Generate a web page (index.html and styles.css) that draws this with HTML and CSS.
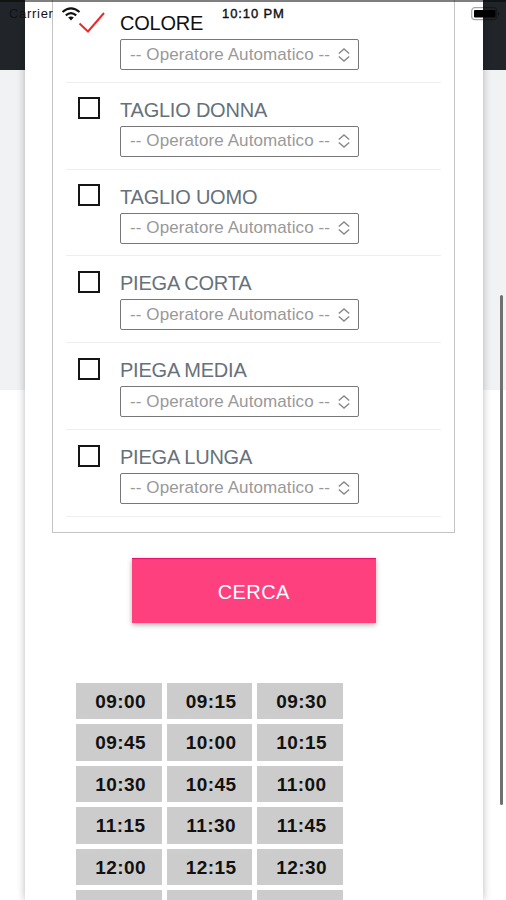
FILE: index.html
```html
<!DOCTYPE html>
<html lang="it">
<head>
<meta charset="utf-8">
<title>Prenotazione</title>
<link rel="stylesheet" href="styles.css">
</head>
<body>
<svg class="defs" width="0" height="0" aria-hidden="true">
  <symbol id="chevrons" viewBox="0 0 14 16"><path d="M1.8 6.5 L7 2 L12.2 6.5 M1.8 9.5 L7 14 L12.2 9.5" fill="none" stroke="currentColor" stroke-width="1.4"/></symbol>
</svg>
<main class="card">
  <section class="services">
    <div class="service selected">
      <svg class="check" viewBox="0 0 28 22"><path d="M1.5 12.5 L10 20.5 L26 2" fill="none" stroke="#ed2929" stroke-width="2"/></svg>
      <div class="detail"><h2>COLORE</h2><div class="select"><span>-- Operatore Automatico --</span><svg><use href="#chevrons"/></svg></div></div>
    </div>
    <div class="service"><i class="box"></i><div class="detail"><h2>TAGLIO DONNA</h2><div class="select"><span>-- Operatore Automatico --</span><svg><use href="#chevrons"/></svg></div></div></div>
    <div class="service"><i class="box"></i><div class="detail"><h2>TAGLIO UOMO</h2><div class="select"><span>-- Operatore Automatico --</span><svg><use href="#chevrons"/></svg></div></div></div>
    <div class="service"><i class="box"></i><div class="detail"><h2>PIEGA CORTA</h2><div class="select"><span>-- Operatore Automatico --</span><svg><use href="#chevrons"/></svg></div></div></div>
    <div class="service"><i class="box"></i><div class="detail"><h2>PIEGA MEDIA</h2><div class="select"><span>-- Operatore Automatico --</span><svg><use href="#chevrons"/></svg></div></div></div>
    <div class="service"><i class="box"></i><div class="detail"><h2>PIEGA LUNGA</h2><div class="select"><span>-- Operatore Automatico --</span><svg><use href="#chevrons"/></svg></div></div></div>
  </section>
  <button class="search">CERCA</button>
  <div class="times">
    <span>09:00</span><span>09:15</span><span>09:30</span>
    <span>09:45</span><span>10:00</span><span>10:15</span>
    <span>10:30</span><span>10:45</span><span>11:00</span>
    <span>11:15</span><span>11:30</span><span>11:45</span>
    <span>12:00</span><span>12:15</span><span>12:30</span>
    <span></span><span></span><span></span>
  </div>
</main>
<header class="status">
  <span class="carrier">Carrier</span>
  <svg class="wifi" viewBox="0 0 20 14"><g fill="none" stroke="#111" stroke-width="2.1"><path d="M1.5 5 Q10 -2.4 18.5 5"/><path d="M4.8 8.4 Q10 3.8 15.2 8.4"/></g><path d="M7.2 10.6 Q10 8.4 12.8 10.6 L10 13.4Z" fill="#111"/></svg>
  <span class="clock">10:10 PM</span>
  <svg class="battery" viewBox="0 0 30 14"><rect x=".7" y=".7" width="25" height="12" rx="3" fill="none" stroke="#000" stroke-opacity=".35" stroke-width="1.2"/><rect x="3" y="3" width="21.5" height="7.5" rx="1" fill="#000"/><path d="M27.2 4.5 Q29.5 6.7 27.2 9Z" fill="#111"/></svg>
</header>
<div class="scrollbar"></div>
</body>
</html>
```
FILE: styles.css
```css
* { box-sizing: border-box; }
html { height: 900px; overflow: hidden; }
body {
  margin: 0;
  height: 900px;
  overflow: hidden;
  position: relative;
  padding: 0 23px 0 25px;
  font-family: "Liberation Sans", Arial, sans-serif;
  background: linear-gradient(#212529 70px, #f1f2f4 70px, #f1f2f4 390px, #fff 390px);
}
.defs { position: absolute; }
.card {
  height: 900px;
  overflow: hidden;
  padding: 0 27px;
  background: #fff;
  box-shadow: 0 0 8px rgba(0, 0, 0, .28);
}
.services {
  height: 532.5px;
  width: 403px;
  padding: 0 13px;
  border: 1.5px solid #c4c4c4;
  border-top: 0;
}
.service {
  display: flex;
  height: 86.8px;
  padding: 14.6px 0 0 11.5px;
  border-bottom: 1.5px solid #eee;
}
.service.selected { height: 82.8px; padding-top: 11px; }
.box {
  flex: none;
  width: 22px;
  height: 22px;
  margin-right: 20.5px;
  border: 2px solid #151515;
}
.check { flex: none; width: 28px; height: 22px; margin-right: 14.5px; }
.detail { width: 239px; }
h2 {
  margin: 0;
  height: 28.4px;
  padding-top: 1.4px;
  font-size: 20px;
  line-height: 23px;
  font-weight: 400;
  letter-spacing: -.22px;
  white-space: nowrap;
  color: #66717b;
}
.selected h2 { color: #111; padding-top: 1px; }
.select {
  display: flex;
  align-items: center;
  justify-content: space-between;
  height: 31px;
  padding: 0 7px 0 9px;
  border: 1.5px solid #777;
  border-radius: 2px;
  font-size: 17px;
  letter-spacing: .1px;
  white-space: nowrap;
  color: #999;
}
.select svg { width: 14px; height: 16px; color: #888; }
.search {
  display: block;
  width: 243.5px;
  height: 65px;
  margin: 25px 0 0 80px;
  padding: 3px 0 0;
  border: 0;
  border-top: 1px solid #f0106c;
  background: #ff407f;
  box-shadow: 0 2px 5px rgba(0, 0, 0, .3);
  font-family: inherit;
  font-size: 20px;
  letter-spacing: .4px;
  color: #fff;
}
.times {
  display: grid;
  grid-template-columns: repeat(3, 85.5px);
  grid-auto-rows: 36.5px;
  gap: 5px;
  margin: 60px 0 0 24.4px;
}
.times span {
  display: flex;
  align-items: center;
  justify-content: center;
  padding: 1.5px 0 0 3px;
  background: #ccc;
  font-size: 19px;
  font-weight: 700;
  letter-spacing: .4px;
  color: #111;
}
.status {
  position: absolute;
  inset: 0 0 auto;
  height: 25px;
  display: flex;
  align-items: center;
  padding: 0 5px 0 9px;
  border-top: 2px solid rgba(0, 0, 0, .5);
  font-size: 13px;
  color: #222;
}
.carrier { width: 52px; letter-spacing: .7px; color: #111; }
.wifi { width: 20px; height: 14px; }
.clock { margin-left: 141px; font-weight: 400; font-size: 13px; letter-spacing: .9px; color: #111; -webkit-text-stroke: .4px #111; }
.battery { width: 30px; height: 14px; margin-left: auto; }
.scrollbar {
  position: absolute;
  right: 3px;
  top: 295px;
  width: 3px;
  height: 510px;
  border-radius: 2px;
  background: #707070;
}
```
